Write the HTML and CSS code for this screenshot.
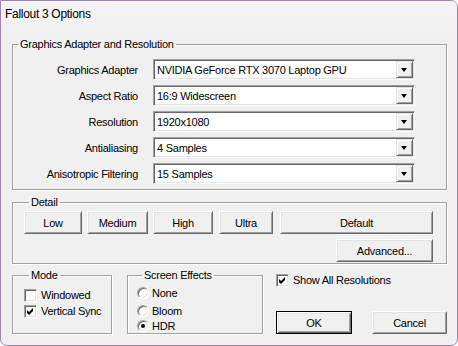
FILE: index.html
```html
<!DOCTYPE html>
<html>
<head>
    <title>Fallout 3 Options</title>
    <link rel="stylesheet" href="styles.css">
</head>
<body>
    <div class="window">
        <div class="titlebar">Fallout 3 Options</div>
        <div class="client">
            <fieldset class="group adapter">
                <legend>Graphics Adapter and Resolution</legend>
                <div class="fields">
                    <label>Graphics Adapter</label>
                    <div class="combo"><span>NVIDIA GeForce RTX 3070 Laptop GPU</span><i class="drop"></i></div>
                    <label>Aspect Ratio</label>
                    <div class="combo"><span>16:9 Widescreen</span><i class="drop"></i></div>
                    <label>Resolution</label>
                    <div class="combo"><span>1920x1080</span><i class="drop"></i></div>
                    <label>Antialiasing</label>
                    <div class="combo"><span>4 Samples</span><i class="drop"></i></div>
                    <label>Anisotropic Filtering</label>
                    <div class="combo"><span>15 Samples</span><i class="drop"></i></div>
                </div>
            </fieldset>
            <fieldset class="group detail">
                <legend>Detail</legend>
                <div class="presets">
                    <button class="btn low">Low</button>
                    <button class="btn medium">Medium</button>
                    <button class="btn high">High</button>
                    <button class="btn ultra">Ultra</button>
                    <button class="btn default">Default</button>
                </div>
                <div class="more">
                    <button class="btn advanced">Advanced...</button>
                </div>
            </fieldset>
            <div class="bottom">
                <fieldset class="group mode">
                    <legend>Mode</legend>
                    <div class="check"><span class="box"></span>Windowed</div>
                    <div class="check"><span class="box checked"><svg width="9" height="9" viewBox="0 0 9 9"><path d="M1 3 L3 5 L7 1 L7 4 L3 8 L1 6 Z" fill="#000"/></svg></span>Vertical Sync</div>
                </fieldset>
                <fieldset class="group effects">
                    <legend>Screen Effects</legend>
                    <div class="radio r1"><span class="dot"></span>None</div>
                    <div class="radio r2"><span class="dot"></span>Bloom</div>
                    <div class="radio r3"><span class="dot on"></span>HDR</div>
                </fieldset>
                <div class="side">
                    <div class="check"><span class="box checked"><svg width="9" height="9" viewBox="0 0 9 9"><path d="M1 3 L3 5 L7 1 L7 4 L3 8 L1 6 Z" fill="#000"/></svg></span>Show All Resolutions</div>
                    <div class="actions">
                        <button class="btn ok">OK</button>
                        <button class="btn cancel">Cancel</button>
                    </div>
                </div>
            </div>
        </div>
    </div>
</body>
</html>
```

FILE: styles.css
```css
*{
    margin: 0;
    padding: 0;
    box-sizing: border-box;
}
body{
    font-family: "Liberation Sans", Arial, sans-serif;
    font-size: 11px;
    letter-spacing: -0.25px;
    color: #000;
    background: #fff;
}
.window{
    width: 458px;
    height: 346px;
    border: 1px solid #a383b3;
    border-radius: 0 7px 7px 7px;
    background: #f0f0f0;
    overflow: hidden;
}
.titlebar{
    height: 37px;
    padding: 6px 0 0 4px;
    font-size: 12px;
    letter-spacing: -0.3px;
    line-height: 15px;
    background: linear-gradient(#f4f4f4, #f0f0f0);
}
.client{
    padding: 0 10px 0 11px;
}
.group{
    border: 1px solid #a0a0a0;
    box-shadow: inset 1px 1px 0 #fff, 1px 1px 0 #fff;
    min-width: 0;
}
.group legend{
    margin-left: 5px;
    padding: 0 2px 0 2px;
    line-height: 13px;
}
.adapter{
    padding: 8px 0 5px 0;
}
.fields{
    display: grid;
    grid-template-columns: 125px 262px;
    column-gap: 15px;
    row-gap: 5px;
    align-items: center;
}
.fields label{
    text-align: right;
}
.combo{
    height: 21px;
    display: flex;
    align-items: center;
    background: #fff;
    border: 1px solid;
    border-color: #a0a0a0 #fff #fff #a0a0a0;
    box-shadow: inset 1px 1px 0 #696969, inset -1px -1px 0 #e3e3e3;
    padding: 1px 1px 1px 3px;
}
.combo span{
    flex: 1;
    white-space: nowrap;
    overflow: hidden;
}
.drop{
    width: 17px;
    height: 17px;
    background: #f0f0f0;
    border: 1px solid;
    border-color: #e3e3e3 #696969 #696969 #e3e3e3;
    box-shadow: inset 1px 1px 0 #fff, inset -1px -1px 0 #a0a0a0;
    position: relative;
}
.drop:after{
    content: "";
    position: absolute;
    left: 4px;
    top: 6px;
    border-left: 3.5px solid transparent;
    border-right: 3.5px solid transparent;
    border-top: 4px solid #000;
}
.btn{
    font: inherit;
    letter-spacing: inherit;
    color: #000;
    height: 23px;
    background: #f0f0f0;
    border: 1px solid;
    border-color: #fff #696969 #696969 #fff;
    box-shadow: inset 1px 1px 0 #e3e3e3, inset -1px -1px 0 #a0a0a0;
}
.detail{
    margin-top: 6px;
    padding: 2px 13px 1px 11px;
}
.presets{
    display: flex;
}
.low{ width: 58px; }
.medium{ width: 61px; margin-left: 5px; }
.high{ width: 60px; margin-left: 5px; }
.ultra{ width: 54px; margin-left: 6px; }
.default{ width: 153px; margin-left: 7px; }
.more{
    display: flex;
    justify-content: flex-end;
    margin-top: 5px;
}
.advanced{ width: 97px; }
.bottom{
    display: flex;
    margin-top: 5px;
    height: 65px;
}
.mode{
    width: 100px;
    padding: 5px 0 0 11px;
}
.effects{
    width: 136px;
    margin-left: 15px;
    padding: 0 0 0 9px;
}
.check{
    display: flex;
    align-items: center;
    height: 16px;
    white-space: nowrap;
}
.box{
    width: 13px;
    height: 13px;
    margin-right: 4px;
    background: #fff;
    border: 1px solid;
    border-color: #a0a0a0 #fff #fff #a0a0a0;
    box-shadow: inset 1px 1px 0 #696969, inset -1px -1px 0 #e3e3e3;
    padding: 1px;
}
.box svg{
    display: block;
}
.radio{
    display: flex;
    align-items: center;
    height: 13px;
}
.r1{ margin-top: 4px; }
.r2{ margin-top: 5px; }
.r3{ margin-top: 2px; }
.dot{
    width: 12px;
    height: 12px;
    margin-right: 3px;
    border-radius: 50%;
    background: #fff;
    border: 1px solid;
    border-color: #a0a0a0 #fff #fff #a0a0a0;
    box-shadow: inset 1px 1px 0 #696969, inset -1px -1px 0 #e3e3e3;
    position: relative;
}
.dot.on:after{
    content: "";
    position: absolute;
    left: 3px;
    top: 3px;
    width: 4px;
    height: 4px;
    border-radius: 50%;
    background: #000;
}
.side{
    flex: 1;
    margin-left: 13px;
    padding-top: 3px;
    display: flex;
    flex-direction: column;
}
.actions{
    margin-top: auto;
    display: flex;
    justify-content: space-between;
}
.ok{
    width: 76px;
    border: 1px solid #000;
    box-shadow: inset 1px 1px 0 #fff, inset -1px -1px 0 #696969, inset 2px 2px 0 #e3e3e3, inset -2px -2px 0 #a0a0a0;
}
.cancel{ width: 75px; }
```
